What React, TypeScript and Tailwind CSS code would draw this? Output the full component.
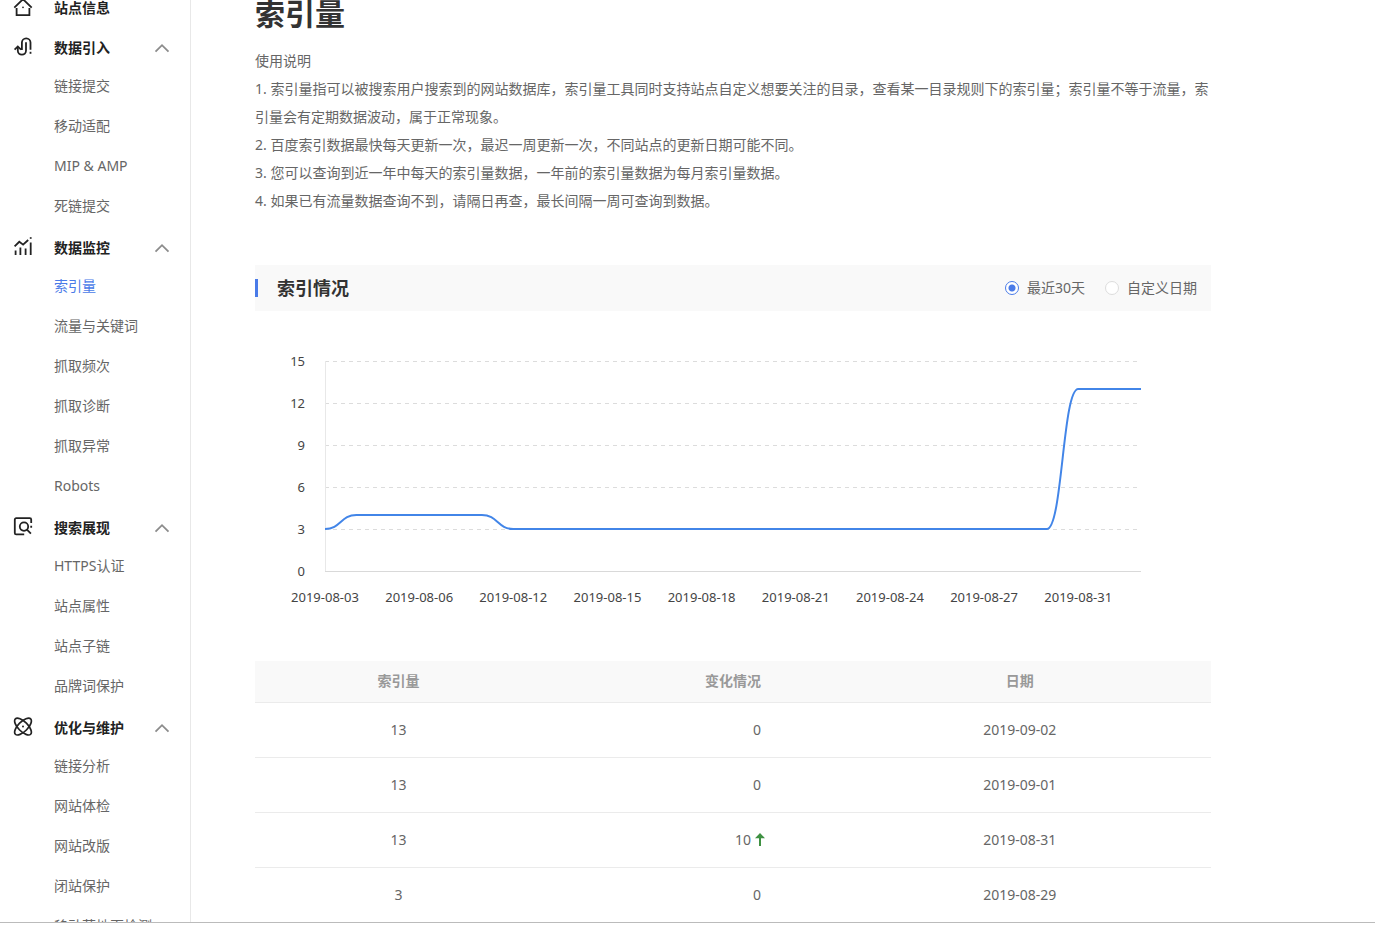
import { useState } from 'react';
import type { ReactNode } from 'react';

type MenuGroup = {
  title: string;
  icon: ReactNode;
  items: string[];
};

const HomeIcon = () => (
  <svg className="mt-0.5 h-5 w-5" viewBox="0 0 20 20" fill="none" stroke="currentColor" strokeWidth={1.8}>
    <path d="M1.3 10.7 10 2.2l8.7 8.5" />
    <path d="M3.6 11v7.1h12.8V11" />
    <circle cx="10" cy="10.3" r="0.9" fill="currentColor" stroke="none" />
  </svg>
);

const LinkIcon = () => (
  <svg className="mt-0.5 h-5 w-5" viewBox="0 0 20 20" fill="none" stroke="currentColor" strokeWidth={1.8}>
    <path d="M1.6 12.6 4.8 9.4l3.2 3.2" />
    <path d="M4.8 10v3.6a4.1 4.1 0 0 0 8.2 0V5.2" />
    <path d="M8.9 13V5.6a4.3 4.3 0 0 1 8.6 0v7.2" />
    <path d="M17.5 14.8v2" />
  </svg>
);

const MonitorIcon = () => (
  <svg className="mt-0.5 h-5 w-5" viewBox="0 0 20 20" fill="none" stroke="currentColor" strokeWidth={1.8}>
    <path d="M1.6 9.4 6.3 4.8l3.8 2.8L15.2 3" />
    <path d="M2.6 13.4V18M7.4 10.6V18M12.6 11.6V18M17.7 5.4V18" />
    <path d="M17.7.2v1.6" />
  </svg>
);

const SearchIcon = () => (
  <svg className="mt-0.5 h-5 w-5" viewBox="0 0 20 20" fill="none" stroke="currentColor" strokeWidth={1.8}>
    <path d="M18.2 6V2.6a1.4 1.4 0 0 0-1.4-1.4H3.2a1.4 1.4 0 0 0-1.4 1.4v13.4a1.4 1.4 0 0 0 1.4 1.4h8" />
    <circle cx="11" cy="9.6" r="4.2" />
    <path d="m13.9 12.6 4 4M18.2 8.8v2" />
  </svg>
);

const OptimizeIcon = () => (
  <svg className="mt-0.5 h-5 w-5" viewBox="0 0 20 20" fill="none" stroke="currentColor" strokeWidth={1.7}>
    <ellipse cx="10" cy="9.6" rx="10.8" ry="4.8" transform="rotate(45 10 9.6)" />
    <ellipse cx="10" cy="9.6" rx="10.8" ry="4.8" transform="rotate(-45 10 9.6)" />
    <circle cx="10" cy="9.6" r="1" fill="currentColor" stroke="none" />
  </svg>
);

const ChevronUp = () => (
  <svg className="h-4 w-4" viewBox="0 0 16 16" fill="none" stroke="#8c8c8c" strokeWidth={1.8}>
    <path d="M1.5 11.7 8 5.2l6.5 6.5" />
  </svg>
);

const menuGroups: MenuGroup[] = [
  {
    title: '数据引入',
    icon: <LinkIcon />,
    items: ['链接提交', '移动适配', 'MIP & AMP', '死链提交'],
  },
  {
    title: '数据监控',
    icon: <MonitorIcon />,
    items: ['索引量', '流量与关键词', '抓取频次', '抓取诊断', '抓取异常', 'Robots'],
  },
  {
    title: '搜索展现',
    icon: <SearchIcon />,
    items: ['HTTPS认证', '站点属性', '站点子链', '品牌词保护'],
  },
  {
    title: '优化与维护',
    icon: <OptimizeIcon />,
    items: ['链接分析', '网站体检', '网站改版', '闭站保护', '移动落地页检测'],
  },
];

const notes = [
  '使用说明',
  '1. 索引量指可以被搜索用户搜索到的网站数据库，索引量工具同时支持站点自定义想要关注的目录，查看某一目录规则下的索引量；索引量不等于流量，索引量会有定期数据波动，属于正常现象。',
  '2. 百度索引数据最快每天更新一次，最迟一周更新一次，不同站点的更新日期可能不同。',
  '3. 您可以查询到近一年中每天的索引量数据，一年前的索引量数据为每月索引量数据。',
  '4. 如果已有流量数据查询不到，请隔日再查，最长间隔一周可查询到数据。',
];

const ranges = [
  { value: '30d', label: '最近30天' },
  { value: 'custom', label: '自定义日期' },
];

const rows = [
  { count: 13, change: 0, date: '2019-09-02' },
  { count: 13, change: 0, date: '2019-09-01' },
  { count: 13, change: 10, date: '2019-08-31' },
  { count: 3, change: 0, date: '2019-08-29' },
];

// Chart geometry
const LEFT = 70;
const RIGHT = 886;
const TOP = 20;
const BOTTOM = 230;
const MAX = 15;

const ticks = [15, 12, 9, 6, 3, 0];
const dates = [
  '2019-08-03',
  '2019-08-06',
  '2019-08-12',
  '2019-08-15',
  '2019-08-18',
  '2019-08-21',
  '2019-08-24',
  '2019-08-27',
  '2019-08-31',
];
const values = [3, 4, 4, 4, 4, 4, ...Array(18).fill(3), 13, 13, 13];

const step = (RIGHT - LEFT) / (values.length - 1);
const getX = (i: number) => LEFT + i * step;
const getY = (v: number) => BOTTOM - (v / MAX) * (BOTTOM - TOP);

const linePath = values.reduce((path: string, v: number, i: number) => {
  if (i === 0) return `M${getX(0)} ${getY(v)}`;
  const mid = (getX(i - 1) + getX(i)) / 2;
  return `${path}C${mid} ${getY(values[i - 1])} ${mid} ${getY(v)} ${getX(i)} ${getY(v)}`;
}, '');

function Sidebar() {
  return (
    <nav className="-mt-3.5 w-[191px] shrink-0 overflow-hidden border-r border-[#e8e8e8]">
      <a href="#site" className="flex h-10 items-center pl-[13px] text-[#222]">
        <HomeIcon />
        <span className="ml-[21px] pt-1 font-bold">站点信息</span>
      </a>
      {menuGroups.map((group) => (
        <div key={group.title}>
          <button type="button" className="flex h-10 w-full items-center pr-5 pl-[13px] text-[#222]">
            {group.icon}
            <span className="ml-[21px] flex-1 pt-1 text-left font-bold">{group.title}</span>
            <span className="pt-1">
              <ChevronUp />
            </span>
          </button>
          <ul>
            {group.items.map((item) => (
              <li key={item}>
                <a
                  href="#menu"
                  className={`block h-10 pl-[54px] leading-10 whitespace-nowrap ${
                    item === '索引量' ? 'text-[#4a7be8]' : 'text-[#666]'
                  }`}
                >
                  {item}
                </a>
              </li>
            ))}
          </ul>
        </div>
      ))}
    </nav>
  );
}

function IndexChart() {
  return (
    <svg className="mt-[30px] block h-auto w-full" viewBox="0 0 956 270" role="img" aria-label="索引情况">
      {ticks.map((tick) => (
        <g key={tick}>
          <text x={50} y={getY(tick) + 5} textAnchor="end" fontSize={13} fill="#444">
            {tick}
          </text>
          {tick > 0 && (
            <line
              x1={LEFT}
              x2={RIGHT - 2}
              y1={getY(tick) + 0.5}
              y2={getY(tick) + 0.5}
              stroke="#dcdcdc"
              strokeDasharray="4 4"
            />
          )}
        </g>
      ))}
      <path d={`M${LEFT + 0.5} ${TOP}V${BOTTOM + 0.5}`} stroke="#e8e8e8" />
      <path d={`M${LEFT} ${BOTTOM + 0.5}H${RIGHT}`} stroke="#d9d9d9" />
      {dates.map((date, i) => (
        <text key={date} x={getX(i * 3)} y={261} textAnchor="middle" fontSize={13} fill="#444">
          {date}
        </text>
      ))}
      <path d={linePath} fill="none" stroke="#4285e8" strokeWidth={2} />
    </svg>
  );
}

function IndexTable() {
  return (
    <table className="mt-[50px] w-full table-fixed border-collapse text-center">
      <colgroup>
        <col className="w-[30%]" />
        <col className="w-[40%]" />
        <col className="w-[20%]" />
        <col className="w-[10%]" />
      </colgroup>
      <thead>
        <tr className="h-[41px] border-b border-[#ebebeb] bg-[#f9f9f9] text-[#999]">
          <th className="font-bold">索引量</th>
          <th className="font-bold">变化情况</th>
          <th className="font-bold">日期</th>
          <td />
        </tr>
      </thead>
      <tbody>
        {rows.map((row) => (
          <tr key={row.date} className="h-[55px] border-b border-[#ebebeb]">
            <td>{row.count}</td>
            <td>
              <div className="mx-auto flex w-14 items-center justify-end gap-1">
                {row.change}
                {row.change > 0 && (
                  <svg className="-mr-1 h-3.5 w-2.5" viewBox="0 0 10 14" fill="#3f9142">
                    <path d="M5 0 0 5.2h4V13h2V5.2h4z" />
                  </svg>
                )}
              </div>
            </td>
            <td>{row.date}</td>
            <td />
          </tr>
        ))}
      </tbody>
    </table>
  );
}

export default function App() {
  const [range, setRange] = useState('30d');

  return (
    <div className="flex h-screen flex-col bg-white pb-0.5 font-['Noto_Sans','Noto_Sans_CJK_SC',sans-serif] text-sm text-[#666]">
      <div className="flex min-h-0 flex-1 overflow-hidden border-b border-[#bbb]">
        <Sidebar />

        <main className="min-w-0 flex-1 px-16">
          <div className="max-w-[956px]">
            <h1 className="mb-[19px] text-3xl leading-7 font-bold text-[#333]">索引量</h1>

            <div className="leading-7">
              {notes.map((note) => (
                <p key={note}>{note}</p>
              ))}
            </div>

            {/* Section header */}
            <div className="mt-[50px] flex h-[46px] items-center justify-between bg-[#f9f9f9] pr-3.5">
              <div className="flex items-center">
                <span className="h-[18px] w-[3px] bg-[#4a7be8]" />
                <h2 className="ml-[19px] text-lg font-bold text-[#333]">索引情况</h2>
              </div>
              <div className="flex items-center gap-5">
                {ranges.map((item) => (
                  <label key={item.value} className="flex items-center gap-2">
                    <input
                      type="radio"
                      name="range"
                      value={item.value}
                      checked={range === item.value}
                      onChange={() => setRange(item.value)}
                      className="h-3.5 w-3.5 appearance-none rounded-full border border-[#ddd] bg-white checked:border-[#4a7be8] checked:bg-[radial-gradient(circle,#4a7be8_3px,white_4px)]"
                    />
                    {item.label}
                  </label>
                ))}
              </div>
            </div>

            <IndexChart />
            <IndexTable />
          </div>
        </main>
      </div>
    </div>
  );
}
